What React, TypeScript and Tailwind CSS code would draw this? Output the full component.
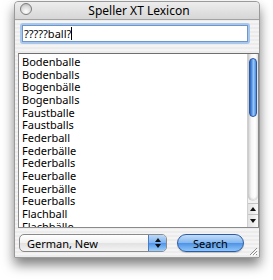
import React from "react";

const words = [
  "Bodenballe",
  "Bodenballs",
  "Bogenbälle",
  "Bogenballs",
  "Faustballe",
  "Faustballs",
  "Federball",
  "Federbälle",
  "Federballs",
  "Feuerballe",
  "Feuerbälle",
  "Feuerballs",
  "Flachball",
  "Flachbälle",
];

const Grip = () => (
  <svg width="9" height="9" viewBox="0 0 9 9" className="absolute right-[1px] bottom-[1px]">
    <path d="M8 1 L1 8 M8 4 L4 8 M8 7 L7 8" stroke="#8d8d8d" strokeWidth="1" />
    <path d="M9 2 L2 9 M9 5 L5 9" stroke="#ffffff" strokeWidth="1" />
  </svg>
);

export default function App() {
  return (
    <div className="w-[273px] h-[280px] bg-white pt-[1px] pl-[14px] font-['Noto_Sans',sans-serif] text-black">
      <div className="relative w-[246px] h-[257px] flex flex-col border border-[#9a9a9a] rounded-t-[4px] bg-[repeating-linear-gradient(0deg,#ececec_0px,#ececec_2px,#f4f4f4_2px,#f4f4f4_4px)] shadow-[0_7px_12px_rgba(0,0,0,0.5)]">
        {/* title bar */}
        <div className="relative h-[18px] flex items-center justify-center border-b border-[#a3a3a3] bg-[linear-gradient(#ededed,#d6d6d6)] rounded-t-[4px]">
          <span className="absolute left-[5px] top-[1px] w-[12px] h-[12px] rounded-full border border-[#7d7d7d] bg-[radial-gradient(circle_at_50%_75%,#ffffff,#d8d8d8_60%,#a9a9a9)]"></span>
          <span className="text-[12px] leading-none pl-[4px]">Speller XT Lexicon</span>
        </div>

        {/* search field */}
        <div className="ml-[5px] mr-[9px] mt-[3px] h-[21px] rounded-[3px] bg-[#a8c7ec] p-[2px]">
          <div className="h-full bg-white border border-[#7095c8] flex items-center pl-[1px]">
            <span className="text-[11px] leading-none">?????ball?</span>
            <span className="w-px h-[13px] bg-black"></span>
          </div>
        </div>

        {/* list */}
        <div className="ml-[3px] mt-[9px] w-[241px] h-[175px] border border-[#8a8a8a] border-t-[#6f6f6f] bg-white flex">
          <div className="flex-1 overflow-hidden pt-[2px] pl-[3px]">
            {words.map((w) => (
              <div key={w} className="h-[12.67px] text-[11px] leading-[12.67px] whitespace-nowrap">
                {w}
              </div>
            ))}
          </div>
          <div className="w-[11px] flex flex-col border-l border-[#d0d0d0] bg-[#f2f2f2]">
            <div className="relative flex-1 rounded-b-[6px] bg-[linear-gradient(90deg,#cfcfcf,#f6f6f6_35%,#ffffff_70%,#e9e9e9)] shadow-[inset_0_-2px_2px_rgba(0,0,0,0.12)]">
              <div className="absolute left-[1px] top-[4px] w-[8px] h-[59px] rounded-full border border-[#2a57a6] bg-[linear-gradient(90deg,#2c60bd,#5d9ce8_35%,#9ccaf7_55%,#4b8be0)]"></div>
            </div>
            <div className="h-[12px] mt-[2px] border-t border-b border-[#c4c4c4] flex items-center justify-center bg-[linear-gradient(90deg,#e2e2e2,#fafafa)]">
              <svg width="6" height="4" viewBox="0 0 6 4">
                <path d="M3 0 L6 4 L0 4 Z" fill="#111" />
              </svg>
            </div>
            <div className="flex-none h-[12px] flex items-center justify-center bg-[linear-gradient(90deg,#e2e2e2,#fafafa)]">
              <svg width="6" height="4" viewBox="0 0 6 4">
                <path d="M0 0 L6 0 L3 4 Z" fill="#111" />
              </svg>
            </div>
          </div>
        </div>

        {/* bottom controls */}
        <div className="mt-[6px] ml-[4px] flex items-center gap-[10px]">
          <div className="w-[148px] h-[18px] flex rounded-[5px] border border-[#8a8a8a] overflow-hidden bg-[linear-gradient(#ffffff,#f1f1f1_50%,#e2e2e2_51%,#f3f3f3)]">
            <div className="flex-1 flex items-center pl-[7px] text-[11px] leading-none">German, New</div>
            <div className="w-[18px] flex items-center justify-center border-l border-[#4a7cc4] bg-[linear-gradient(#bcd9f8,#7fb3f0_50%,#4d93ea_51%,#9fd0fb)]">
              <svg width="6" height="10" viewBox="0 0 6 10">
                <path d="M3 0 L6 4 L0 4 Z M0 6 L6 6 L3 10 Z" fill="#111" />
              </svg>
            </div>
          </div>
          <div className="w-[67px] h-[18px] rounded-full border border-[#2d5ca3] flex items-center justify-center text-[11px] leading-none bg-[linear-gradient(#c3ddf8,#86b8ef_48%,#4f93e6_52%,#8fc6fa)] shadow-[0_1px_1px_rgba(0,0,0,0.2)]">
            Search
          </div>
        </div>

        <Grip />
      </div>
    </div>
  );
}
